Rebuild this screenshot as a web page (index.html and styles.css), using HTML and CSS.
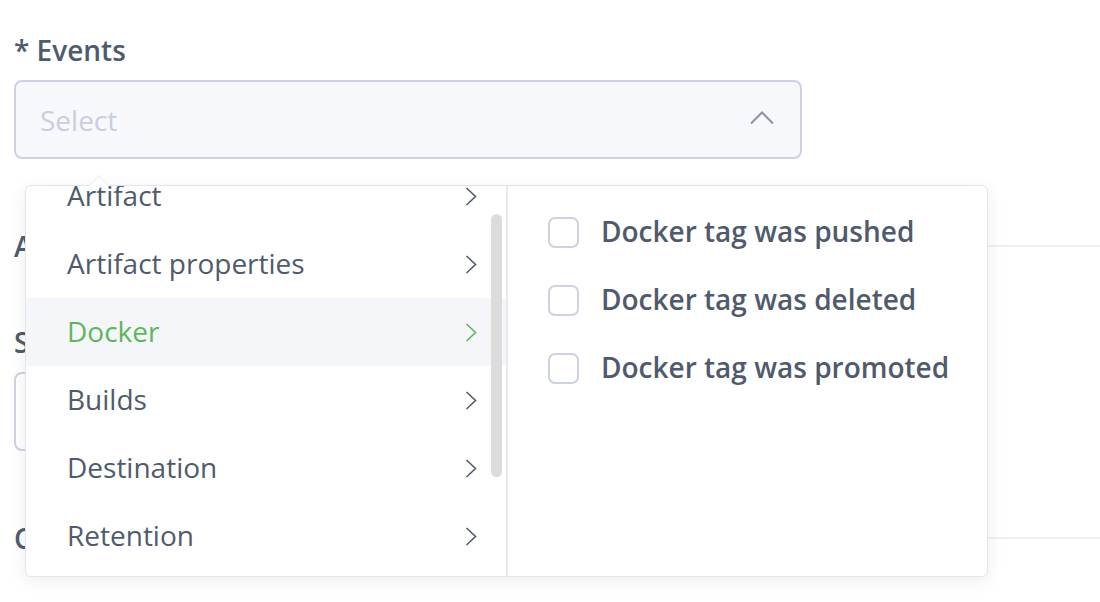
FILE: index.html
```html
<!DOCTYPE html>
<html>
<head>
<meta charset="utf-8">
<link rel="stylesheet" href="styles.css">
</head>
<body>
<div class="page">
  <div class="form">
    <div class="label">* Events</div>
    <div class="select">
      <span class="placeholder">Select</span>
      <svg class="caret" width="24" height="14" viewBox="0 0 24 14"><path d="M1 12.5 L12 1.5 L23 12.5" fill="none" stroke="#8e90a8" stroke-width="2"/></svg>
    </div>
    <div class="section"><span class="section-title">Actions</span><span class="section-line"></span></div>
    <div class="label sub">Secret</div>
    <div class="input"></div>
    <div class="section section-2"><span class="section-title">Custom</span><span class="section-line"></span></div>
  </div>

  <div class="dropdown">
    <div class="arrow"></div>
    <div class="col-left">
      <div class="list">
        <div class="item"><span>Artifact</span><svg class="chev" width="12" height="19" viewBox="0 0 12 19"><path d="M1.5 1 L10.5 9.5 L1.5 18" fill="none" stroke="currentColor" stroke-width="1.6"/></svg></div>
        <div class="item"><span>Artifact properties</span><svg class="chev" width="12" height="19" viewBox="0 0 12 19"><path d="M1.5 1 L10.5 9.5 L1.5 18" fill="none" stroke="currentColor" stroke-width="1.6"/></svg></div>
        <div class="item active"><span>Docker</span><svg class="chev" width="12" height="19" viewBox="0 0 12 19"><path d="M1.5 1 L10.5 9.5 L1.5 18" fill="none" stroke="currentColor" stroke-width="1.6"/></svg></div>
        <div class="item"><span>Builds</span><svg class="chev" width="12" height="19" viewBox="0 0 12 19"><path d="M1.5 1 L10.5 9.5 L1.5 18" fill="none" stroke="currentColor" stroke-width="1.6"/></svg></div>
        <div class="item"><span>Destination</span><svg class="chev" width="12" height="19" viewBox="0 0 12 19"><path d="M1.5 1 L10.5 9.5 L1.5 18" fill="none" stroke="currentColor" stroke-width="1.6"/></svg></div>
        <div class="item"><span>Retention</span><svg class="chev" width="12" height="19" viewBox="0 0 12 19"><path d="M1.5 1 L10.5 9.5 L1.5 18" fill="none" stroke="currentColor" stroke-width="1.6"/></svg></div>
      </div>
      <div class="scrollbar"></div>
    </div>
    <div class="col-right">
      <label class="check"><span class="box"></span><span>Docker tag was pushed</span></label>
      <label class="check"><span class="box"></span><span>Docker tag was deleted</span></label>
      <label class="check"><span class="box"></span><span>Docker tag was promoted</span></label>
    </div>
  </div>
</div>
</body>
</html>
```
FILE: styles.css
```css
* { box-sizing: border-box; }
html, body { margin: 0; padding: 0; background: #fff; }
body {
  font-family: "Open Sans", "Noto Sans", sans-serif;
  color: #4f5b6d;
  width: 1100px;
  height: 602px;
  overflow: hidden;
}
.page { position: relative; width: 1100px; height: 602px; }
.form {
  padding: 32px 0 0 14px;
  display: flex;
  flex-direction: column;
}
.label {
  font-size: 28px;
  font-weight: 600;
  line-height: 36px;
  height: 36px;
}
.select {
  margin-top: 12px;
  width: 788px;
  height: 79px;
  border: 2px solid #cdd1e3;
  border-radius: 8px;
  background: #f7f8fb;
  display: flex;
  align-items: center;
  justify-content: space-between;
  padding: 0 26px 0 24px;
}
.placeholder { font-size: 28px; color: #c9cee0; }
.caret { margin-top: -3px; }
.section {
  margin-top: 69px;
  height: 36px;
  display: flex;
  align-items: center;
  font-size: 28px;
  font-weight: 600;
}
.section-line { flex: 1; height: 2px; background: #efeff5; margin-left: 20px; }
.section-2 { margin-top: 69px; }
.label.sub { margin-top: 60px; }
.input {
  margin-top: 12px;
  width: 788px;
  height: 79px;
  border: 2px solid #cdd1e3;
  border-radius: 8px;
}

.dropdown {
  position: absolute;
  left: 25px;
  top: 185px;
  width: 963px;
  height: 392px;
  background: #fff;
  border: 1px solid #e4e5ec;
  border-radius: 6px;
  box-shadow: 0 4px 18px rgba(30, 35, 60, 0.08);
  display: flex;
}
.arrow {
  position: absolute;
  left: 66px;
  top: -8px;
  width: 14px;
  height: 14px;
  background: #fff;
  border-left: 1px solid #eceef3;
  border-top: 1px solid #eceef3;
  transform: rotate(45deg);
}
.col-left {
  position: relative;
  width: 482px;
  border-right: 2px solid #e8e9ef;
  overflow: hidden;
  border-radius: 6px 0 0 6px;
}
.list { margin-top: -24px; }
.item {
  height: 68px;
  display: flex;
  align-items: center;
  justify-content: space-between;
  padding: 0 29px 2px 41px;
  font-size: 28px;
  color: #4f5b6d;
}
.item .chev { color: #4f5b6d; margin-top: 2px; }
.item.active { background: #f5f6fa; color: #5db75a; }
.item.active .chev { color: #5db75a; }
.scrollbar {
  position: absolute;
  right: 4px;
  top: 28px;
  width: 11px;
  height: 263px;
  border-radius: 6px;
  background: #dcdcdd;
}
.col-right {
  flex: 1;
  padding: 11px 0 0 40px;
  display: flex;
  flex-direction: column;
}
.check {
  height: 68px;
  display: flex;
  align-items: center;
  gap: 22px;
  font-size: 28px;
  font-weight: 600;
  color: #4f5b6d;
}
.box {
  width: 31px;
  height: 31px;
  border: 2px solid #cdd1e4;
  border-radius: 7px;
  background: #fff;
  flex: none;
  margin-top: 2px;
}
```
